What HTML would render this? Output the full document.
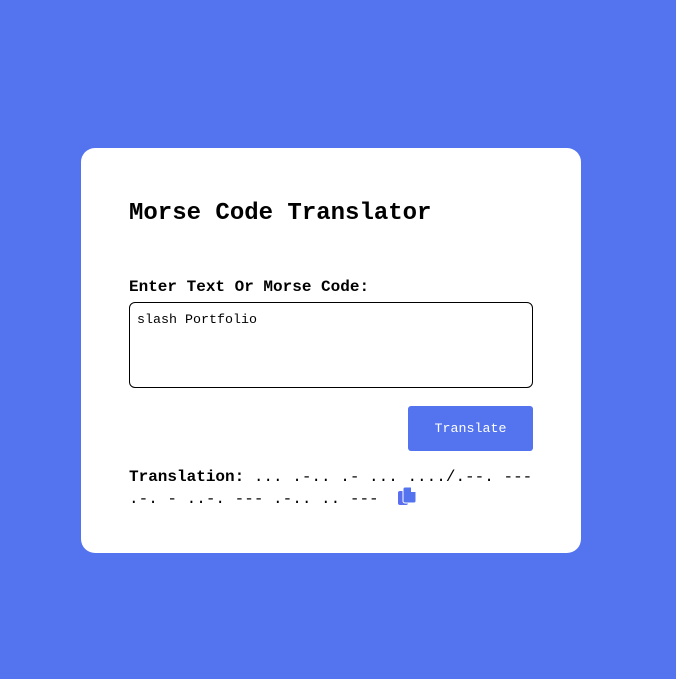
<!DOCTYPE html>
<html><head><meta charset="utf-8"><style>
html,body{margin:0;padding:0}
body{width:676px;height:679px;background:#5474ef;position:relative;overflow:hidden;font-family:"Liberation Mono",monospace;color:#000}
.card{position:absolute;left:81px;top:148px;width:500px;height:405px;background:#fff;border-radius:14px}
h1{position:absolute;left:48px;top:51px;margin:0;font-size:24px;font-weight:bold;line-height:30px;white-space:nowrap}
.lbl{position:absolute;left:48px;top:129px;font-size:16px;font-weight:bold;line-height:20px;white-space:nowrap}
.ta{position:absolute;left:48px;top:154px;width:402px;height:84px;border:1px solid #000;border-radius:6px;box-sizing:content-box}
.ta span{position:absolute;left:7px;top:10px;font-size:13.33px;line-height:16px}
.btn{position:absolute;left:327px;top:258px;width:125px;height:45px;background:#5474ef;border-radius:3px;color:#fff;font-size:13.33px;line-height:48px;text-align:center}
.tr{position:absolute;left:48px;top:318px;width:410px;font-size:16px;line-height:22px}
.tr b{font-weight:bold}
.ic{position:absolute;left:316px;top:338px}
</style></head><body>
<div class="card">
<h1>Morse Code Translator</h1>
<div class="lbl">Enter Text Or Morse Code:</div>
<div class="ta"><span>slash Portfolio</span></div>
<div class="btn">Translate</div>
<div class="tr"><b>Translation:</b> ... .-.. .- ... ..../.--. ---<br>.-. - ..-. --- .-.. .. ---</div>
<svg class="ic" width="22" height="20" viewBox="0 0 22 20">
<rect x="1" y="5" width="10" height="14" rx="2" fill="#5a6ff0"/>
<path d="M8 1h6l5 5v9a2 2 0 0 1-2 2H8a2 2 0 0 1-2-2V3a2 2 0 0 1 2-2z" fill="#5474ef" stroke="#fff" stroke-width="1"/>
<path d="M14 1v5h5z" fill="#fff"/>
</svg>
</div>
</body></html>
